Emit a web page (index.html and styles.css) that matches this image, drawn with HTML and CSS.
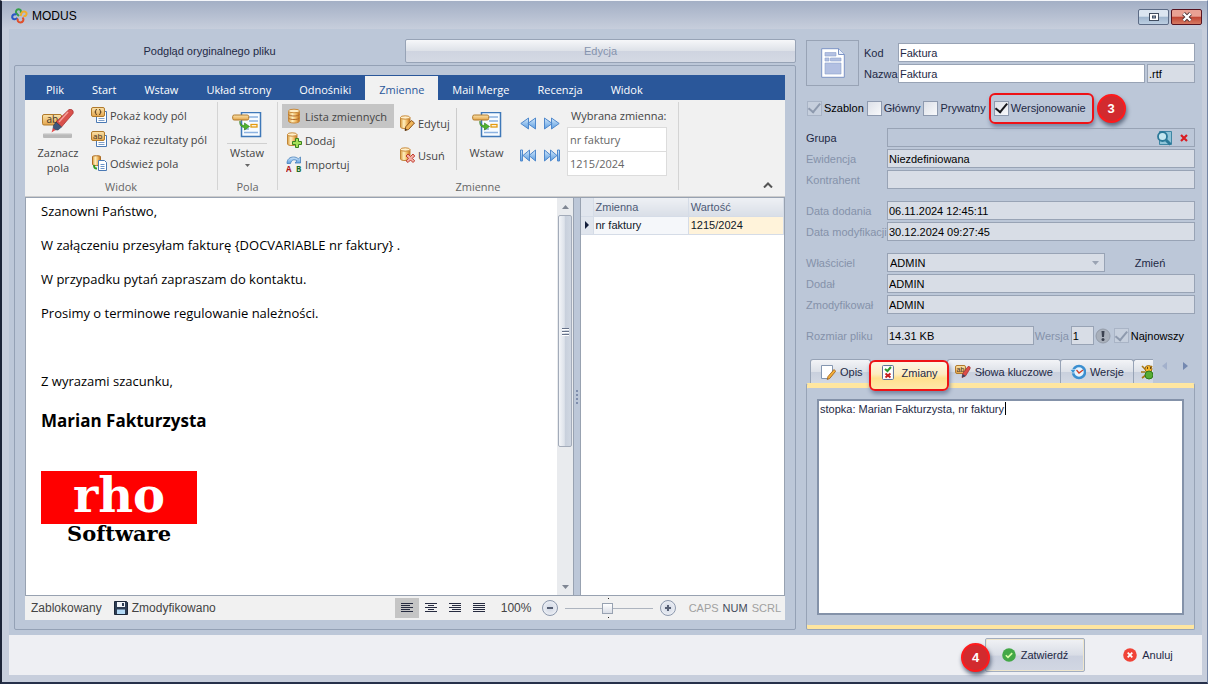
FILE: index.html
```html
<!DOCTYPE html>
<html lang="pl">
<head>
<meta charset="utf-8">
<title>MODUS</title>
<link rel="stylesheet" href="styles.css">
</head>
<body>
<svg class="defs" aria-hidden="true">
  <defs>
    <linearGradient id="gold" x1="0" x2="1"><stop offset="0" stop-color="#d99a3c"/><stop offset=".35" stop-color="#fff0c0"/><stop offset=".7" stop-color="#eeb45a"/><stop offset="1" stop-color="#b86a1c"/></linearGradient>
    <linearGradient id="amber" x1="0" x2="0" y1="0" y2="1"><stop offset="0" stop-color="#fbe3ab"/><stop offset="1" stop-color="#e3a54c"/></linearGradient>
    <linearGradient id="sky" x1="0" x2="0" y1="0" y2="1"><stop offset="0" stop-color="#d3e8fb"/><stop offset="1" stop-color="#5b9de0"/></linearGradient>
    <symbol id="db" viewBox="0 0 16 16"><path d="M2.500 3v10c0 1 2 2 5.500 2s5.500-1 5.500-2V3z" fill="url(#gold)" stroke="#c98b3c"/><ellipse cx="8" cy="3" rx="5.500" ry="1.800" fill="#ffedc4" stroke="#c98b3c"/><path d="M2.500 6.500c1 2 10 2 11 0M2.500 10c1 2 10 2 11 0" fill="none" stroke="#b0692a"/></symbol>
    <symbol id="cyl" viewBox="0 0 16 16"><path d="M1.500 2.500v9.500c0 .8 1.500 1.500 4.500 1.500s5-.7 5-1.500V2.500z" fill="url(#gold)" stroke="#c08538"/><ellipse cx="6.200" cy="2.500" rx="4.700" ry="1.700" fill="#ffefca" stroke="#c98b3c"/></symbol>
    <symbol id="add" viewBox="0 0 16 16"><use href="#cyl"/><path d="M9.500 6.500h3v3h3v3h-3v3h-3v-3h-3v-3h3z" fill="#a6e05a" stroke="#3b8220"/></symbol>
    <symbol id="del" viewBox="0 0 16 16"><use href="#cyl"/><path d="M7 9l2-2 2.500 2.500L14 7l1.700 2-2.400 2.400 2.400 2.400L14 15.500 11.500 13 9 15.500 7 13.800l2.500-2.400z" fill="#f3b0a8" stroke="#c0392b"/></symbol>
    <symbol id="edit" viewBox="0 0 16 16"><use href="#cyl"/><path d="M12.500 5.500l3 2.500-6 6.500-3.500 1 .8-3.800z" fill="#f0b55a" stroke="#8a5219"/><path d="M6 15.500l.6-2 1.400 1.400z" fill="#222"/></symbol>
    <symbol id="import" viewBox="0 0 16 16"><path d="M1 7.500C1 3 4 1 7.500 1c2 0 3.500.6 4.800 1.800L14.500 1v6H9l2-2.200C8.500 3 5.500 3.500 4.500 7.500z" fill="url(#sky)" stroke="#467fb8" stroke-width=".8"/><text x="0" y="15.500" font-size="8" font-weight="bold" fill="#b01818">A</text><text x="10" y="15.500" font-size="8" font-weight="bold" fill="#1c6b26">B</text></symbol>
    <symbol id="codes" viewBox="0 0 16 16"><path d="M5.500 4.500h10v11h-10z" fill="#fff" stroke="#4a79b4"/><path d="M7.500 11.500h6M7.500 13.500h6" stroke="#7f9fc8"/><rect x=".5" y=".5" width="13" height="9" rx="1.500" fill="url(#amber)" stroke="#b07a2c"/><path d="M5.800 2.500H5L4.500 5 5 7.500h.8M3.500 5h1M8.200 2.500H9L9.500 5 9 7.500h-.8M9.500 5h1" fill="none" stroke="#5c4020"/></symbol>
    <symbol id="results" viewBox="0 0 16 16"><path d="M5.500 4.500h10v11h-10z" fill="#fff" stroke="#4a79b4"/><path d="M7.500 11.500h6M7.500 13.500h6" stroke="#7f9fc8"/><rect x=".5" y=".5" width="13" height="9" rx="1.500" fill="url(#amber)" stroke="#b07a2c"/><text x="2" y="7.500" font-size="8" fill="#3d3428">ab</text></symbol>
    <symbol id="refresh" viewBox="0 0 16 16"><path d="M1.500 1.500v8c0 1.300 8 1.300 8 0v-8c0-1-8-1-8 0z" fill="url(#gold)" stroke="#ad6d25"/><path d="M3 10c0 3 1 3.500 3 3.500" fill="none" stroke="#2f9a22" stroke-width="2"/><path d="M7.500 5.500h6l2 2v8h-8z" fill="#fff" stroke="#4a79b4"/><path d="M9.500 9.500h4M9.500 11.500h4M9.500 13.500h4" stroke="#6d94c8"/></symbol>
    <symbol id="insert" viewBox="0 0 30 27"><path d="M9.500.5h19v24h-19z" fill="#f7fbff" stroke="#3f78b8" stroke-width="1.500"/><path d="M17 5h9M17 9h9M12 17h5M12 20.500h14" stroke="#8db2e0" stroke-width="1.300"/><rect x="19" y="12.500" width="6" height="2.500" fill="#fff" stroke="#e39a10" stroke-width="1.300"/><rect x=".7" y="3" width="16" height="5" rx="1.500" fill="url(#amber)" stroke="#b07a2c"/><path d="M8 9c0 3 2 4.500 4.500 4.500V11l5 3.500-5 3.500v-2.500C9.500 15.500 7 13 8 9z" fill="#4eb52d" stroke="#2c7a18" stroke-width=".6"/></symbol>
    <symbol id="marker" viewBox="0 0 32 31"><rect x="1" y="24.500" width="29" height="4.500" rx="1" fill="#b9b9b9"/><path d="M2 24.800h27" stroke="#d9d9d9"/><rect x=".5" y="5.500" width="19" height="10.500" rx="1.500" fill="url(#amber)" stroke="#b07a2c"/><text x="4.500" y="13.500" font-size="10" fill="#3d3428">ab</text><path d="M27 .5c3-.8 5 1.500 4 4L19.500 18 14 13z" fill="#d9514c" stroke="#a52a2a" stroke-width=".7"/><path d="M26 3L17 13" stroke="#f4a09a" stroke-width="1.500"/><path d="M14 13l5.500 5-3.500 3-5-.5.500-4z" fill="#40587c" stroke="#233650" stroke-width=".6"/><path d="M11 19l2.500 2-4 2.500z" fill="#e54848"/></symbol>
    <symbol id="prev" viewBox="0 0 16 13"><path d="M8.500 1v11L.8 6.500zM15.500 1v11L7.800 6.500z" fill="url(#sky)" stroke="#4f88cc"/></symbol>
    <symbol id="next" viewBox="0 0 16 13"><path d="M.5 1v11l7.700-5.500zM7.500 1v11l7.700-5.500z" fill="url(#sky)" stroke="#4f88cc"/></symbol>
    <symbol id="first" viewBox="0 0 16 13"><path d="M.5 1h2v11h-2zM9.500 1v11L3 6.500zM15.500 1v11L9 6.500z" fill="url(#sky)" stroke="#4f88cc"/></symbol>
    <symbol id="last" viewBox="0 0 16 13"><path d="M13.500 1h2v11h-2zM.5 1v11L7 6.500zM6.500 1v11L13 6.500z" fill="url(#sky)" stroke="#4f88cc"/></symbol>
    <symbol id="logo" viewBox="0 0 17 16"><g fill="none" stroke-width="2"><path d="M8 8L5.500 5.500C4 3.500 5.500 1.500 7.500 1.300c2-.1 3.200 1.700 2 3.700" stroke="#35a04a"/><path d="M5.500 6.500C2.500 5.500 1 7.500 1.200 9.500c.3 2 3.300 2.300 5.300.5" stroke="#2a57c4"/><path d="M9.500 8l1-3c1-2 4-1.800 5 0 .5 2-1 3.500-3 3" stroke="#f0ac2c"/><path d="M11.500 9.500c2 2 .5 5-2 5s-3.500-2-2.500-4" stroke="#e0502c"/></g></symbol>
    <symbol id="note" viewBox="0 0 16 16"><path d="M1.500 1.500h11v9l-3.500 4h-7.500z" fill="#fff" stroke="#8496b0"/><path d="M14 5.500l1.700 1.700-6 7.300-2.500 1 .8-3z" fill="#f5b03a" stroke="#9c5d18" stroke-width=".8"/></symbol>
    <symbol id="changes" viewBox="0 0 12 15"><rect x=".5" y=".5" width="11" height="14" rx="1" fill="#fff" stroke="#5a7098"/><path d="M3 4l2.500 2 3.500-4" fill="none" stroke="#2d962d" stroke-width="2"/><path d="M3.500 8.500l5 4m0-4l-5 4" stroke="#c81e1e" stroke-width="2"/></symbol>
    <symbol id="keywords" viewBox="0 0 16 16"><rect x=".5" y="1.500" width="10" height="8" rx="1.500" fill="url(#amber)" stroke="#b07a2c"/><text x="1.500" y="8" font-size="7" fill="#3d3428">ab</text><path d="M13 2.500c1.500-.5 2.800.8 2 2.300L10.500 12l-3.500 1.500.8-4z" fill="#dc4d48" stroke="#9f2a2a" stroke-width=".7"/><path d="M7.600 10l2.900 2-3.500 1.500z" fill="#2f4668"/></symbol>
    <symbol id="versions" viewBox="0 0 16 16"><circle cx="9" cy="8" r="6" fill="#e6f4ff" stroke="#3b8fd0" stroke-width="2.500"/><path d="M0 5.500h6L3 9.500z" fill="#3a94d4" stroke="#fff" stroke-width=".5"/><path d="M6.500 6l2.500 3 4-3" fill="none" stroke="#d04028" stroke-width="1.300"/></symbol>
    <symbol id="debug" viewBox="0 0 12 16"><path d="M1 2l4 4M11 2L8 6M0 8h4M1 14l4-3" stroke="#a77712" stroke-width="1.600"/><circle cx="7.500" cy="5" r="3.500" fill="#f5b52c" stroke="#9b6c16"/><ellipse cx="8" cy="11" rx="4" ry="4" fill="#57ac34" stroke="#2e7a1a"/><path d="M6 4h1M9 4h1" stroke="#302010" stroke-width="1.500"/></symbol>
    <symbol id="ok" viewBox="0 0 14 14"><circle cx="7" cy="7" r="6.800" fill="#43a847"/><path d="M3.800 7.200l2.200 2.200 4.200-4.300" fill="none" stroke="#d8ffa8" stroke-width="1.600"/></symbol>
    <symbol id="cancel" viewBox="0 0 14 14"><circle cx="7" cy="7" r="6.800" fill="#f04438"/><path d="M4.700 4.700l4.600 4.600m0-4.600L4.700 9.300" stroke="#fff" stroke-width="1.800"/></symbol>
    <symbol id="left" viewBox="0 0 12 10"><path d="M0 .5h12M0 4.500h12M0 8.500h12M0 2.500h9M0 6.500h9" stroke="#262b40"/></symbol>
    <symbol id="center" viewBox="0 0 12 10"><path d="M0 .5h12M0 4.500h12M0 8.500h12M3 2.500h6M3 6.500h6" stroke="#262b40"/></symbol>
    <symbol id="right" viewBox="0 0 12 10"><path d="M0 .5h12M0 4.500h12M0 8.500h12M3 2.500h9M3 6.500h9" stroke="#262b40"/></symbol>
    <symbol id="justify" viewBox="0 0 12 10"><path d="M0 .5h12M0 2.500h12M0 4.500h12M0 6.500h12M0 8.500h12" stroke="#262b40"/></symbol>
  </defs>
</svg>

<div class="window">
  <header class="titlebar">
    <svg class="app-icon"><use href="#logo"/></svg>
    <h1>MODUS</h1>
    <button class="win-btn" aria-label="Maksymalizuj"><svg width="12" height="10"><rect x="1.500" y="1.500" width="9" height="7" fill="#fff" stroke="#414d60"/><rect x="4.500" y="4" width="3" height="2" fill="#9fb4ca" stroke="#414d60"/></svg></button>
    <button class="win-btn close" aria-label="Zamknij"><svg width="12" height="10"><path d="M2.500 1.500l7 7m0-7l-7 7" stroke="#4b3436" stroke-width="4"/><path d="M2.500 1.500l7 7m0-7l-7 7" stroke="#fff" stroke-width="2.400"/></svg></button>
  </header>

  <main class="client">
    <section class="editor">
      <nav class="view-tabs">
        <button class="view-tab active">Podgląd oryginalnego pliku</button>
        <button class="view-tab">Edycja</button>
      </nav>
      <div class="editor-frame">
        <nav class="ribbon-tabs">
          <button>Plik</button><button>Start</button><button>Wstaw</button><button>Układ strony</button><button>Odnośniki</button><button class="active">Zmienne</button><button>Mail Merge</button><button>Recenzja</button><button>Widok</button>
        </nav>
        <div class="ribbon">
          <div class="group view-group">
            <div class="group-body">
              <button class="big"><svg class="i-marker"><use href="#marker"/></svg><span>Zaznacz<br>pola</span></button>
              <div class="stack">
                <button class="small"><svg class="i16"><use href="#codes"/></svg>Pokaż kody pól</button>
                <button class="small"><svg class="i16"><use href="#results"/></svg>Pokaż rezultaty pól</button>
                <button class="small"><svg class="i16"><use href="#refresh"/></svg>Odśwież pola</button>
              </div>
            </div>
            <div class="group-title">Widok</div>
          </div>
          <div class="group field-group">
            <div class="group-body">
              <button class="big split"><svg class="i-insert"><use href="#insert"/></svg><span>Wstaw</span><svg width="5" height="3"><path d="M0 0h5L2.500 3z" fill="#666"/></svg></button>
            </div>
            <div class="group-title">Pola</div>
          </div>
          <div class="group var-group">
            <div class="group-body">
              <div class="stack list-stack">
                <button class="small pressed"><svg class="i16"><use href="#db"/></svg>Lista zmiennych</button>
                <button class="small"><svg class="i16"><use href="#add"/></svg>Dodaj</button>
                <button class="small"><svg class="i16"><use href="#import"/></svg>Importuj</button>
              </div>
              <div class="stack edit-stack">
                <button class="small"><svg class="i16"><use href="#edit"/></svg>Edytuj</button>
                <button class="small"><svg class="i16"><use href="#del"/></svg>Usuń</button>
              </div>
              <button class="big divided"><svg class="i-insert"><use href="#insert"/></svg><span>Wstaw</span></button>
              <div class="arrows">
                <button aria-label="Poprzedni"><svg><use href="#prev"/></svg></button>
                <button aria-label="Następny"><svg><use href="#next"/></svg></button>
                <button aria-label="Pierwszy"><svg><use href="#first"/></svg></button>
                <button aria-label="Ostatni"><svg><use href="#last"/></svg></button>
              </div>
              <div class="chosen">
                <label for="var-name">Wybrana zmienna:</label>
                <input id="var-name" value="nr faktury">
                <input aria-label="Wartość zmiennej" value="1215/2024">
              </div>
            </div>
            <div class="group-title">Zmienne</div>
          </div>
          <button class="collapse" aria-label="Zwiń wstążkę"><svg width="10" height="6"><path d="M1 5.500L5 1.500l4 4" fill="none" stroke="#555" stroke-width="2"/></svg></button>
        </div>
        <div class="work">
          <div class="doc-pane">
            <article class="document">
              <p>Szanowni Państwo,</p>
              <p>W załączeniu przesyłam fakturę {DOCVARIABLE nr faktury} .</p>
              <p>W przypadku pytań zapraszam do kontaktu.</p>
              <p>Prosimy o terminowe regulowanie należności.</p>
              <p>&nbsp;</p>
              <p>Z wyrazami szacunku,</p>
              <h2>Marian Fakturzysta</h2>
              <div class="brand"><span class="brand-top">rho</span><span class="brand-bottom">Software</span></div>
            </article>
            <div class="scroll">
              <svg class="cap" viewBox="0 0 7 4"><path d="M0 4h7L3.500 0z" fill="#7f8693"/></svg>
              <div class="thumb"><i></i><i></i><i></i></div>
              <svg class="cap end" viewBox="0 0 7 4"><path d="M0 0h7L3.500 4z" fill="#7f8693"/></svg>
            </div>
          </div>
          <div class="splitter"><i></i><i></i><i></i><i></i></div>
          <div class="vars">
            <table>
              <thead><tr><th class="mark"></th><th>Zmienna</th><th>Wartość</th></tr></thead>
              <tbody><tr><td class="mark"><svg width="4" height="8"><path d="M0 0l4 4-4 4z" fill="#15203c"/></svg></td><td>nr faktury</td><td class="current">1215/2024</td></tr></tbody>
            </table>
          </div>
        </div>
        <div class="status">
          <span>Zablokowany</span>
          <svg class="disk" viewBox="0 0 14 14"><path d="M.5.500h12l1 1v12H.5z" fill="#2e3d54" stroke="#1c2738"/><path d="M3 1h8v5H3z" fill="#f3f6fa"/><path d="M8 2h2v3H8z" fill="#2e3d54"/><path d="M3 8.500h8V13H3z" fill="#b4daf6"/></svg>
          <span class="modified">Zmodyfikowano</span>
          <button class="align on" aria-label="Do lewej"><svg><use href="#left"/></svg></button>
          <button class="align" aria-label="Wyśrodkuj"><svg><use href="#center"/></svg></button>
          <button class="align" aria-label="Do prawej"><svg><use href="#right"/></svg></button>
          <button class="align" aria-label="Wyjustuj"><svg><use href="#justify"/></svg></button>
          <span class="percent">100%</span>
          <button class="round" aria-label="Pomniejsz"><svg width="8" height="8"><path d="M1 4h6" stroke="#565f74" stroke-width="2"/></svg></button>
          <input class="zoom" type="range" min="0" max="100" value="49" aria-label="Powiększenie">
          <button class="round" aria-label="Powiększ"><svg width="8" height="8"><path d="M1 4h6M4 1v6" stroke="#565f74" stroke-width="2"/></svg></button>
          <span class="lock first">CAPS</span><span class="lock on">NUM</span><span class="lock">SCRL</span>
        </div>
      </div>
    </section>

    <aside class="props">
      <div class="identity">
        <div class="file-box"><svg viewBox="0 0 24 30" width="24" height="30"><path d="M.7.700h17l5.600 5.600v23H.7z" fill="#fff" stroke="#7c93c4"/><path d="M17.500.7v5.800h5.800" fill="#e8eefa" stroke="#7c93c4"/><path d="M4 4.500h11v3.500H4zM4 10h4v3H4zM9.500 10H20v3H9.500zM4 15h16v11H4z" fill="#b3c0e2" stroke="#8fa1cc" stroke-width=".6"/></svg></div>
        <div class="names">
          <label for="code">Kod</label><input id="code" class="white wide" value="Faktura">
          <label for="name">Nazwa</label><input id="name" class="white" value="Faktura"><input aria-label="Rozszerzenie" class="ext" value=".rtf" readonly>
        </div>
      </div>

      <div class="flags">
        <label class="strong"><input type="checkbox" checked disabled>Szablon</label>
        <label><input type="checkbox">Główny</label>
        <label><input type="checkbox">Prywatny</label>
        <label class="versioned"><input type="checkbox" checked>Wersjonowanie</label>
        <span class="callout">3</span>
      </div>

      <div class="fields">
        <label class="dark" for="group">Grupa</label>
        <div class="lookup"><input id="group" readonly>
          <button aria-label="Szukaj"><svg width="16" height="16"><path d="M3.500 1.500h12v13h-12z" fill="#8fc4d8" stroke="#3f86a4"/><circle cx="6.500" cy="6.500" r="4.500" fill="#c4e6f0" stroke="#2a7898" stroke-width="1.800"/><path d="M10 10l4.500 4.500" stroke="#2a7898" stroke-width="3"/></svg></button>
          <button aria-label="Wyczyść"><svg width="8" height="8"><path d="M1 1l6 6m0-6L1 7" stroke="#da1c22" stroke-width="2.200"/></svg></button>
        </div>
        <label for="reg">Ewidencja</label><input id="reg" value="Niezdefiniowana" readonly>
        <label for="contractor">Kontrahent</label><input id="contractor" readonly>
      </div>
      <div class="fields">
        <label for="added">Data dodania</label><input id="added" value="06.11.2024 12:45:11" readonly>
        <label for="changed">Data modyfikacji</label><input id="changed" value="30.12.2024 09:27:45" readonly>
      </div>
      <div class="fields">
        <label for="owner">Właściciel</label>
        <div class="owner-row"><div class="select-box"><select id="owner"><option>ADMIN</option></select><svg width="7" height="4"><path d="M0 0h7L3.500 4z" fill="#9aa3b3"/></svg></div><button class="plain">Zmień</button></div>
        <label for="adder">Dodał</label><input id="adder" value="ADMIN" readonly>
        <label for="modifier">Zmodyfikował</label><input id="modifier" value="ADMIN" readonly>
      </div>
      <div class="fields">
        <label for="size">Rozmiar pliku</label>
        <div class="size-row"><input id="size" value="14.31 KB" readonly><label for="ver">Wersja</label><input id="ver" value="1" readonly>
          <svg class="warn" viewBox="0 0 16 16"><circle cx="8" cy="8" r="7" fill="#a9b0bb" stroke="#949ca9"/><path d="M6.500 3h3L9 9H7z" fill="#3c4250"/><circle cx="8" cy="11.500" r="1.500" fill="#3c4250"/></svg>
          <label class="check strong"><input type="checkbox" checked disabled>Najnowszy</label></div>
      </div>

      <nav class="tabs">
        <button><svg class="i16"><use href="#note"/></svg>Opis</button>
        <button class="active"><svg class="i-changes"><use href="#changes"/></svg>Zmiany</button>
        <button class="keywords"><svg class="i16"><use href="#keywords"/></svg>Słowa kluczowe</button>
        <button class="versions"><svg class="i16"><use href="#versions"/></svg>Wersje</button>
        <button class="cut" aria-label="Debug"><svg class="i-debug"><use href="#debug"/></svg></button>
        <div class="pager"><svg width="5" height="8"><path d="M5 0v8L0 4z" fill="#a2b0cb"/></svg><svg width="5" height="8"><path d="M0 0v8l5-4z" fill="#7488b0"/></svg></div>
      </nav>
      <div class="tab-panel"><textarea aria-label="Zmiany">stopka: Marian Fakturzysta, nr faktury</textarea><span class="caret"></span></div>
    </aside>
  </main>

  <footer class="actions">
    <span class="callout">4</span>
    <button class="primary"><svg><use href="#ok"/></svg>Zatwierdź</button>
    <button class="quiet"><svg><use href="#cancel"/></svg>Anuluj</button>
  </footer>
</div>
</body>
</html>
```
FILE: styles.css
```css
* { box-sizing: border-box; }
body { margin: 0; background: #20283a; font: 11px/14px "Liberation Sans", Arial, sans-serif; color: #1e2945; }
button, input, select, textarea { font: inherit; color: inherit; margin: 0; padding: 0; border: 0; border-radius: 0; background: none; outline: 0; }
button { cursor: pointer; }
.defs { position: absolute; width: 0; height: 0; }
.i16 { width: 16px; height: 16px; flex: none; }

/* window frame */
.window { min-height: 100vh; display: flex; flex-direction: column; border: 1px solid #7485a5; border-width: 1px 1px 2px 2px; border-color: #f4f6fa #7485a5 #26304a #1c2437; padding: 0 5px 7px 7px; background: linear-gradient(#a3afc5 0, #c7cedc 28px); }
.titlebar { display: flex; align-items: center; height: 28px; gap: 4px; padding: 1px 0 0 2px; }
.titlebar h1 { margin: 0; flex: 1; font: 12px/16px "Liberation Sans", Arial, sans-serif; color: #000; }
.app-icon { width: 17px; height: 16px; }
.win-btn { width: 31px; height: 16px; margin-left: -2px; margin-top: 3px; border: 1px solid #5c6b85; border-radius: 2px; background: linear-gradient(#dbe5f0 45%, #9fb5cd 50%, #bdcfe2); display: flex; align-items: center; justify-content: center; }
.win-btn.close { border-color: #571420; background: linear-gradient(#e9a193 45%, #c04432 50%, #d67a62); }

/* client area */
.client { flex: 1; display: grid; grid-template-columns: minmax(0, 782px) minmax(389px, 1fr); column-gap: 10px; padding: 10px 7px 5px 5px; background: #bcc7d8; }
.editor { display: flex; flex-direction: column; }
.view-tabs { display: grid; grid-template-columns: 1fr 1fr; height: 26px; }
.view-tab { color: #8593ae; border: 1px solid #97a3b6; border-radius: 2px; background: linear-gradient(#f6f7f9, #dde1e8 50%, #cfd4e0 52%, #d4d9e4); height: 24px; }
.view-tab.active { color: #1e2945; background: none; border-color: transparent; }
.editor-frame { flex: 1; display: flex; flex-direction: column; border: 1px solid #94a1b5; border-radius: 2px; padding: 9px 10px; }

/* ribbon */
.ribbon-tabs { display: flex; flex: none; height: 25px; background: #2a579a; font: 11px/16px "Open Sans", sans-serif; color: #fff; padding-left: 7px; }
.ribbon-tabs button { padding: 4px 14px 0; white-space: nowrap; }
.ribbon-tabs .active { background: #f1f1f1; color: #2a579a; margin-top: 1px; padding: 3px 14px 0; }
.ribbon { display: flex; flex: none; height: 97px; background: #f1f1f1; font: 11px/15px "Open Sans", sans-serif; color: #444; border-bottom: 1px solid #cdcdcd; }
.group { display: flex; flex-direction: column; border-right: 1px solid #d4d4d4; margin: 2px 0 6px; }
.group-body { flex: 1; display: flex; align-items: flex-start; min-height: 0; }
.group-title { text-align: center; color: #666; height: 12px; line-height: 17px; }
.view-group { width: 193px; }
.field-group { width: 60px; }
.var-group { width: 401px; }
.big { display: flex; flex-direction: column; align-items: center; width: 58px; padding-top: 7px; }
.view-group .big { width: 66px; }
.i-marker { width: 32px; height: 31px; margin-bottom: 5px; }
.i-insert { width: 30px; height: 27px; margin: 1px 0 6px; }
.split .i-insert { margin-bottom: 4px; }
.split span { border-top: 1px solid #d0d0d0; padding: 1px 3px 4px; }
.field-group .big { padding-top: 9px; }
.divided { width: 60px; border-left: 1px solid #ccc; height: 62px; margin-top: 6px; padding-top: 3px; }
.stack { display: flex; flex-direction: column; padding-top: 1px; }
.small { display: flex; align-items: center; gap: 3px; height: 24px; white-space: nowrap; }
.list-stack { padding: 2px 0 0 4px; width: 116px; }
.list-stack .small { padding-left: 4px; }
.pressed { background: #c5c5c5; }
.edit-stack { padding: 9px 0 0 5px; gap: 8px; width: 62px; }
.arrows { display: grid; grid-template-columns: 16px 16px; column-gap: 8px; row-gap: 19px; padding: 15px 7px 0 4px; }
.arrows button, .arrows svg { display: block; width: 16px; height: 13px; }
.chosen { display: flex; flex-direction: column; padding: 6px 0 0; width: 103px; }
.chosen label { padding: 0 0 4px 4px; white-space: nowrap; }
.chosen input { width: 100px; height: 25px; flex: none; border: 1px solid #dcdcdc; background: #fff; padding: 0 2px; color: #666; margin-bottom: -1px; }
.collapse { margin: auto 12px 7px auto; height: 10px; line-height: 6px; }

/* document and variables */
.work { flex: 1; display: flex; min-height: 300px; border-top: 1px solid #98a2b1; border-bottom: 1px solid #98a2b1; }
.doc-pane { flex: 0 1 549px; display: flex; background: #fff; border: solid #98a2b1; border-width: 0 1px; }
.document { flex: 1; padding: 5px 15px; color: #000; font: 13px/17px "Open Sans", sans-serif; }
.document p { margin: 0 0 17px; }
.document h2 { margin: 0; font: bold 17px/24px "Open Sans", sans-serif; padding-top: 2px; }
.brand { width: 156px; margin-top: 38px; text-align: center; font-family: "DejaVu Serif", serif; font-weight: bold; }
.brand-top { display: block; height: 53px; background: #f00; color: #fff; font-size: 48px; line-height: 48px; }
.brand-bottom { display: block; font-size: 21px; line-height: 20px; }
.scroll { flex: none; width: 16px; display: flex; flex-direction: column; background: #e9ebee; padding: 0 1px; align-items: center; }
.cap { width: 7px; height: 4px; margin: 7px 0 6px; }
.cap.end { margin: auto 0 6px; }
.thumb { width: 14px; height: 232px; border: 1px solid #a3abb9; border-radius: 2px; background: linear-gradient(90deg, #f3f5f8, #dde2ea 45%, #c8d0dc 50%, #d0d7e2); display: flex; flex-direction: column; align-items: center; justify-content: center; gap: 2px; }
.thumb i { width: 7px; height: 1px; background: #66728a; box-shadow: 0 1px #fff; }
.splitter { width: 6px; flex: none; background: #bcc7d8; display: flex; flex-direction: column; gap: 2px; align-items: center; justify-content: center; }
.splitter i { width: 2px; height: 2px; background: #7f8ead; }
.vars { flex: 1; background: #fff; border: solid #98a2b1; border-width: 0 1px; }
.vars table { width: 100%; border-collapse: collapse; table-layout: fixed; }
.vars th, .vars td { height: 18px; padding: 0 2px; text-align: left; font-weight: normal; border-right: 1px solid #d5dce7; border-bottom: 1px solid #d5dce7; }
.vars th { background: linear-gradient(#eef0f4, #d9dee7); color: #4d5a76; }
.vars td { background: #f5f7fa; color: #101828; }
.vars .mark { width: 12px; background: #e1e6ee; padding: 0 0 0 4px; }
.vars .mark svg { display: block; }
.vars .current { background: #fff3da; }

/* status bar */
.status { flex: none; display: flex; align-items: center; height: 24px; background: #f1f1f1; padding: 0 4px 0 6px; color: #444; font-size: 12px; }
.status > * { flex: none; }
.disk { width: 14px; height: 14px; margin: 0 4px 0 12px; }
.modified { margin-right: auto; }
.align { width: 24px; height: 20px; display: flex; align-items: center; justify-content: center; }
.align.on { background: #c5c5c5; }
.align svg { width: 12px; height: 10px; }
.percent { width: 51px; text-align: center; }
.round { width: 16px; height: 16px; border: 1px solid #8c98ad; border-radius: 8px; background: radial-gradient(#cfd6e3, #f6f7fa); display: flex; align-items: center; justify-content: center; }
.zoom { appearance: none; width: 88px; margin: 0 7px; height: 20px; background: linear-gradient(#222, #222) 43px 0 / 1px 1px no-repeat, linear-gradient(#222, #222) 43px 100% / 1px 1px no-repeat, linear-gradient(#adb4bf, #adb4bf) center / 100% 1px no-repeat; }
.zoom::-webkit-slider-thumb { appearance: none; width: 11px; height: 11px; border: 1px solid #98a2b1; background: linear-gradient(#fff, #d9dde6); }
.lock { font-size: 11px; color: #a0a0a0; margin-left: 4px; }
.lock.first { margin-left: 13px; }
.lock.on { color: #444b5c; }

/* properties */
.props { display: flex; flex-direction: column; min-width: 0; padding-top: 1px; }
.props input:not([type="checkbox"]) { width: 100%; min-width: 0; height: 19px; border: 1px solid #98a3b5; background: #d8dde6; color: #000; padding: 0 1px; }
.props input.white { background: #fff; color: #1e2945; }
.identity { display: flex; gap: 5px; }
.file-box { flex: none; width: 53px; height: 46px; border: 1px solid #98a3b5; display: flex; align-items: center; justify-content: center; }
.names { flex: 1; display: grid; grid-template-columns: 32px minmax(0, 1fr) 48px; column-gap: 2px; row-gap: 2px; align-items: center; align-content: start; padding-top: 3px; }
.names .wide { grid-column: 2 / 4; }
.flags { display: flex; align-items: center; height: 30px; margin: 7px 0 5px 1px; gap: 3px; white-space: nowrap; }
.flags label, .check { display: flex; align-items: center; gap: 2px; }
.strong { color: #000; }
input[type="checkbox"] { appearance: none; width: 15px; height: 15px; flex: none; border: 1px solid #8e9aaf; background: linear-gradient(135deg, #dce0e8, #f8f9fb); display: grid; place-items: center; }
input[type="checkbox"]:disabled { background: #c6cfdd; border-color: #a9b4c6; }
input[type="checkbox"]:checked::after { content: ""; width: 5px; height: 10px; border: solid #15171c; border-width: 0 2px 2px 0; transform: rotate(40deg) translate(-1px, -1px); }
input[type="checkbox"]:disabled:checked::after { border-color: #8e9aae; }
.flags .versioned { height: 31px; width: 105px; padding-left: 3px; border: 2px solid #ee1216; border-radius: 6px; box-shadow: 1px 3px 4px #7786a3; }
.callout { width: 29px; height: 29px; flex: none; border: 2px solid #ff1a1c; border-radius: 50%; background: #d22a2e; color: #fff; text-align: center; font: bold 13px/25px "Liberation Sans", sans-serif; box-shadow: 1px 3px 4px #5d697f; }
.fields { display: grid; grid-template-columns: 81px minmax(0, 1fr); row-gap: 2px; align-items: center; margin-bottom: 12px; }
.fields label { color: #8592aa; white-space: nowrap; }
.fields label.dark { color: #1e2945; }
.fields label.strong { color: #000; }
.lookup { display: flex; align-items: center; border: 1px solid #98a3b5; height: 19px; padding-right: 6px; gap: 8px; }
.lookup button { height: 16px; display: flex; align-items: center; }
.props .lookup input:not([type="checkbox"]) { border: 0; height: 17px; background: none; }
.owner-row, .size-row { display: flex; align-items: center; }
.select-box { flex: 1; display: grid; align-items: center; }
.select-box > * { grid-area: 1 / 1; }
.select-box svg { justify-self: end; margin-right: 6px; pointer-events: none; }
.select-box select { appearance: none; width: 100%; height: 19px; border: 1px solid #98a3b5; background: #d8dde6; color: #000; padding: 0 2px; }
.plain { width: 90px; }
.props #size { width: auto; flex: 1; }
.props #ver { width: 23px; margin-left: 2px; }
.size-row > label { margin-left: 1px; }
.warn { width: 16px; height: 16px; margin: 0 2px 0 1px; flex: none; }
.check { padding-right: 11px; }

/* tabs */
.tabs { display: flex; align-items: flex-end; height: 26px; padding-left: 5px; margin-top: 1px; }
.tabs button { display: flex; align-items: center; gap: 4px; height: 25px; padding: 0 7px 0 9px; border: 1px solid #97a3b6; border-bottom: 0; border-radius: 3px 3px 0 0; background: linear-gradient(#f3f4f7, #dde1e8 48%, #c9d0dd 52%, #d3d9e4); white-space: nowrap; margin-left: -1px; }
.tabs .active { position: relative; height: 31px; width: 80px; padding: 0 9px 6px 11px; gap: 8px; border: 2px solid #ee1216; border-radius: 6px; background: linear-gradient(#fdf6e4, #fdecc0 45%, #ffe08e 60%, #ffe8a8); box-shadow: 1px 3px 4px #7786a3; margin: 0 -1px -7px -2px; z-index: 1; }
.i-changes { width: 12px; height: 15px; }
.i-debug { width: 12px; height: 16px; }
.tabs .keywords { padding: 0 7px; }
.tabs .versions { padding-right: 9px; }
.tabs .cut { width: 20px; padding: 0 0 0 7px; border-right: 0; border-radius: 3px 0 0 0; }
.pager { display: flex; gap: 16px; margin: 0 7px auto auto; padding-top: 4px; }
.tab-panel { flex: 1; position: relative; display: flex; border: 1px solid #97a3b6; border-top-color: #ffe8a0; border-radius: 2px; padding: 15px 10px 14px; box-shadow: inset 0 4px #ffe6a0, inset 0 -4px #ffe6a0; margin-top: -1px; }
.tab-panel textarea { width: 100%; resize: none; background: #fff; border: 2px solid #8492a9; padding: 1px; min-height: 120px; }
.caret { position: absolute; left: 198px; top: 18px; width: 1px; height: 13px; background: #000; }

/* footer */
.actions { display: flex; align-items: center; justify-content: flex-end; height: 40px; background: #eeeff3; }
.actions .callout { position: relative; z-index: 1; margin: 4px -5px 0 0; }
.actions button { display: flex; align-items: center; justify-content: center; gap: 5px; height: 34px; }
.actions svg { width: 14px; height: 14px; }
.primary { width: 100px; border: 1px solid #a2adbf; border-radius: 2px; background: linear-gradient(#f1f2f5, #d9dde6 50%, #cbd1df 54%, #d2d7e3); box-shadow: inset 0 0 0 1px #efe6cc; }
.quiet { width: 108px; margin-left: 9px; }
```
